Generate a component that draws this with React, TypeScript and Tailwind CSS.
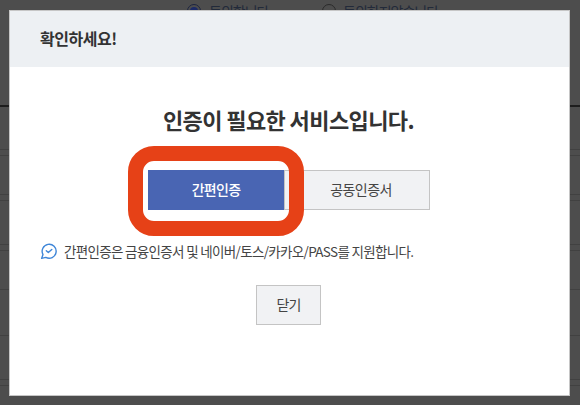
const font = { fontFamily: '"Noto Sans CJK KR", "Noto Sans", sans-serif' };

function BackgroundPage() {
  return (
    <div className="flex flex-col">
      <div className="flex h-[105px] items-start pl-[187px] pt-[2px] text-[14px] leading-[18px] tracking-[-1px] text-[#222a3a]">
        <div className="flex w-[135px] items-center gap-[8px]">
          <span className="flex h-[14px] w-[14px] items-center justify-center rounded-full border border-[#1c2440]">
            <span className="h-[8px] w-[8px] rounded-full bg-[#1c2a66]" />
          </span>
          <span>동의합니다</span>
        </div>
        <div className="flex items-center gap-[7px]">
          <span className="h-[14px] w-[14px] rounded-full border border-[#2a2a2a]" />
          <span>동의하지않습니다</span>
        </div>
      </div>
      <div className="h-[2px] bg-[#1d1d1d]" />
      <div className="h-[43px] border-b border-[#414141]" />
      <div className="h-[6px] border-b border-[#414141]" />
      <div className="h-[39px] border-b border-[#414141]" />
      <div className="h-[6px] border-b border-[#414141]" />
      <div className="h-[44px] border-b border-[#414141]" />
      <div className="h-[6px] border-b border-[#414141]" />
      <div className="h-[39px] border-b border-[#414141]" />
      <div className="h-[46px] border-b border-[#414141]" />
      <div className="h-[44px] border-b border-[#414141]" />
      <div className="h-[6px] border-b border-[#414141]" />
    </div>
  );
}

function CheckBubble() {
  return (
    <svg width="18" height="18" viewBox="0 0 18 18" fill="none" stroke="#3f86d8" strokeWidth="1.4" strokeLinecap="round" strokeLinejoin="round">
      <path d="M1.6 16.4 L3 12.6 A7 7 0 1 1 5.8 15.4 Z" />
      <path d="M6.3 8.8 L8.3 10.6 L11.8 7.4" />
    </svg>
  );
}

export default function App() {
  return (
    <div className="relative h-[405px] w-[580px] overflow-hidden bg-[#4d4d4d]" style={font}>
      <BackgroundPage />

      <div className="absolute left-[9px] top-[10px] h-[386px] w-[561px] border border-[#c6c6c6] bg-white">
        <div className="flex h-[56px] items-center bg-[#edf0f3] pb-[2px] pl-[30px]">
          <h2 className="text-[16px] font-bold tracking-[-0.47px] text-[#333333]">확인하세요!</h2>
        </div>

        <div className="flex flex-col">
          <h1 className="mt-[37px] pr-[2px] text-center text-[22px] leading-[30px] font-bold tracking-[-0.6px] text-[#333333]">
            인증이 필요한 서비스입니다.
          </h1>

          <div className="ml-[138px] mt-[36px] flex">
            <div className="relative">
              <button className="flex h-[40px] w-[136px] items-center justify-center bg-[#4965b3] pb-[1px] text-[14px] font-medium tracking-[-0.7px] text-white">
                간편인증
              </button>
              <div className="absolute -bottom-[26px] -left-[20px] -right-[20px] -top-[24px] rounded-[26px] border-[15px] border-[#e64117]" />
            </div>
            <button className="flex h-[40px] w-[146px] items-center justify-center border border-[#c4c4c4] bg-[#f1f2f4] pb-[1px] pl-[8px] text-[14px] tracking-[-0.6px] text-[#444444]">
              공동인증서
            </button>
          </div>

          <div className="ml-[30px] mt-[31px] flex h-[20px] items-center gap-[6px]">
            <CheckBubble />
            <p className="text-[13.5px] tracking-[-0.67px] text-[#444444]">
              간편인증은 금융인증서 및 네이버/토스/카카오/PASS를 지원합니다.
            </p>
          </div>

          <button className="ml-[246px] mt-[24px] flex h-[40px] w-[65px] items-center justify-center border border-[#c4c4c4] bg-[#f1f2f4] pb-[1px] text-[14px] tracking-[-0.8px] text-[#444444]">
            닫기
          </button>
        </div>
      </div>
    </div>
  );
}
